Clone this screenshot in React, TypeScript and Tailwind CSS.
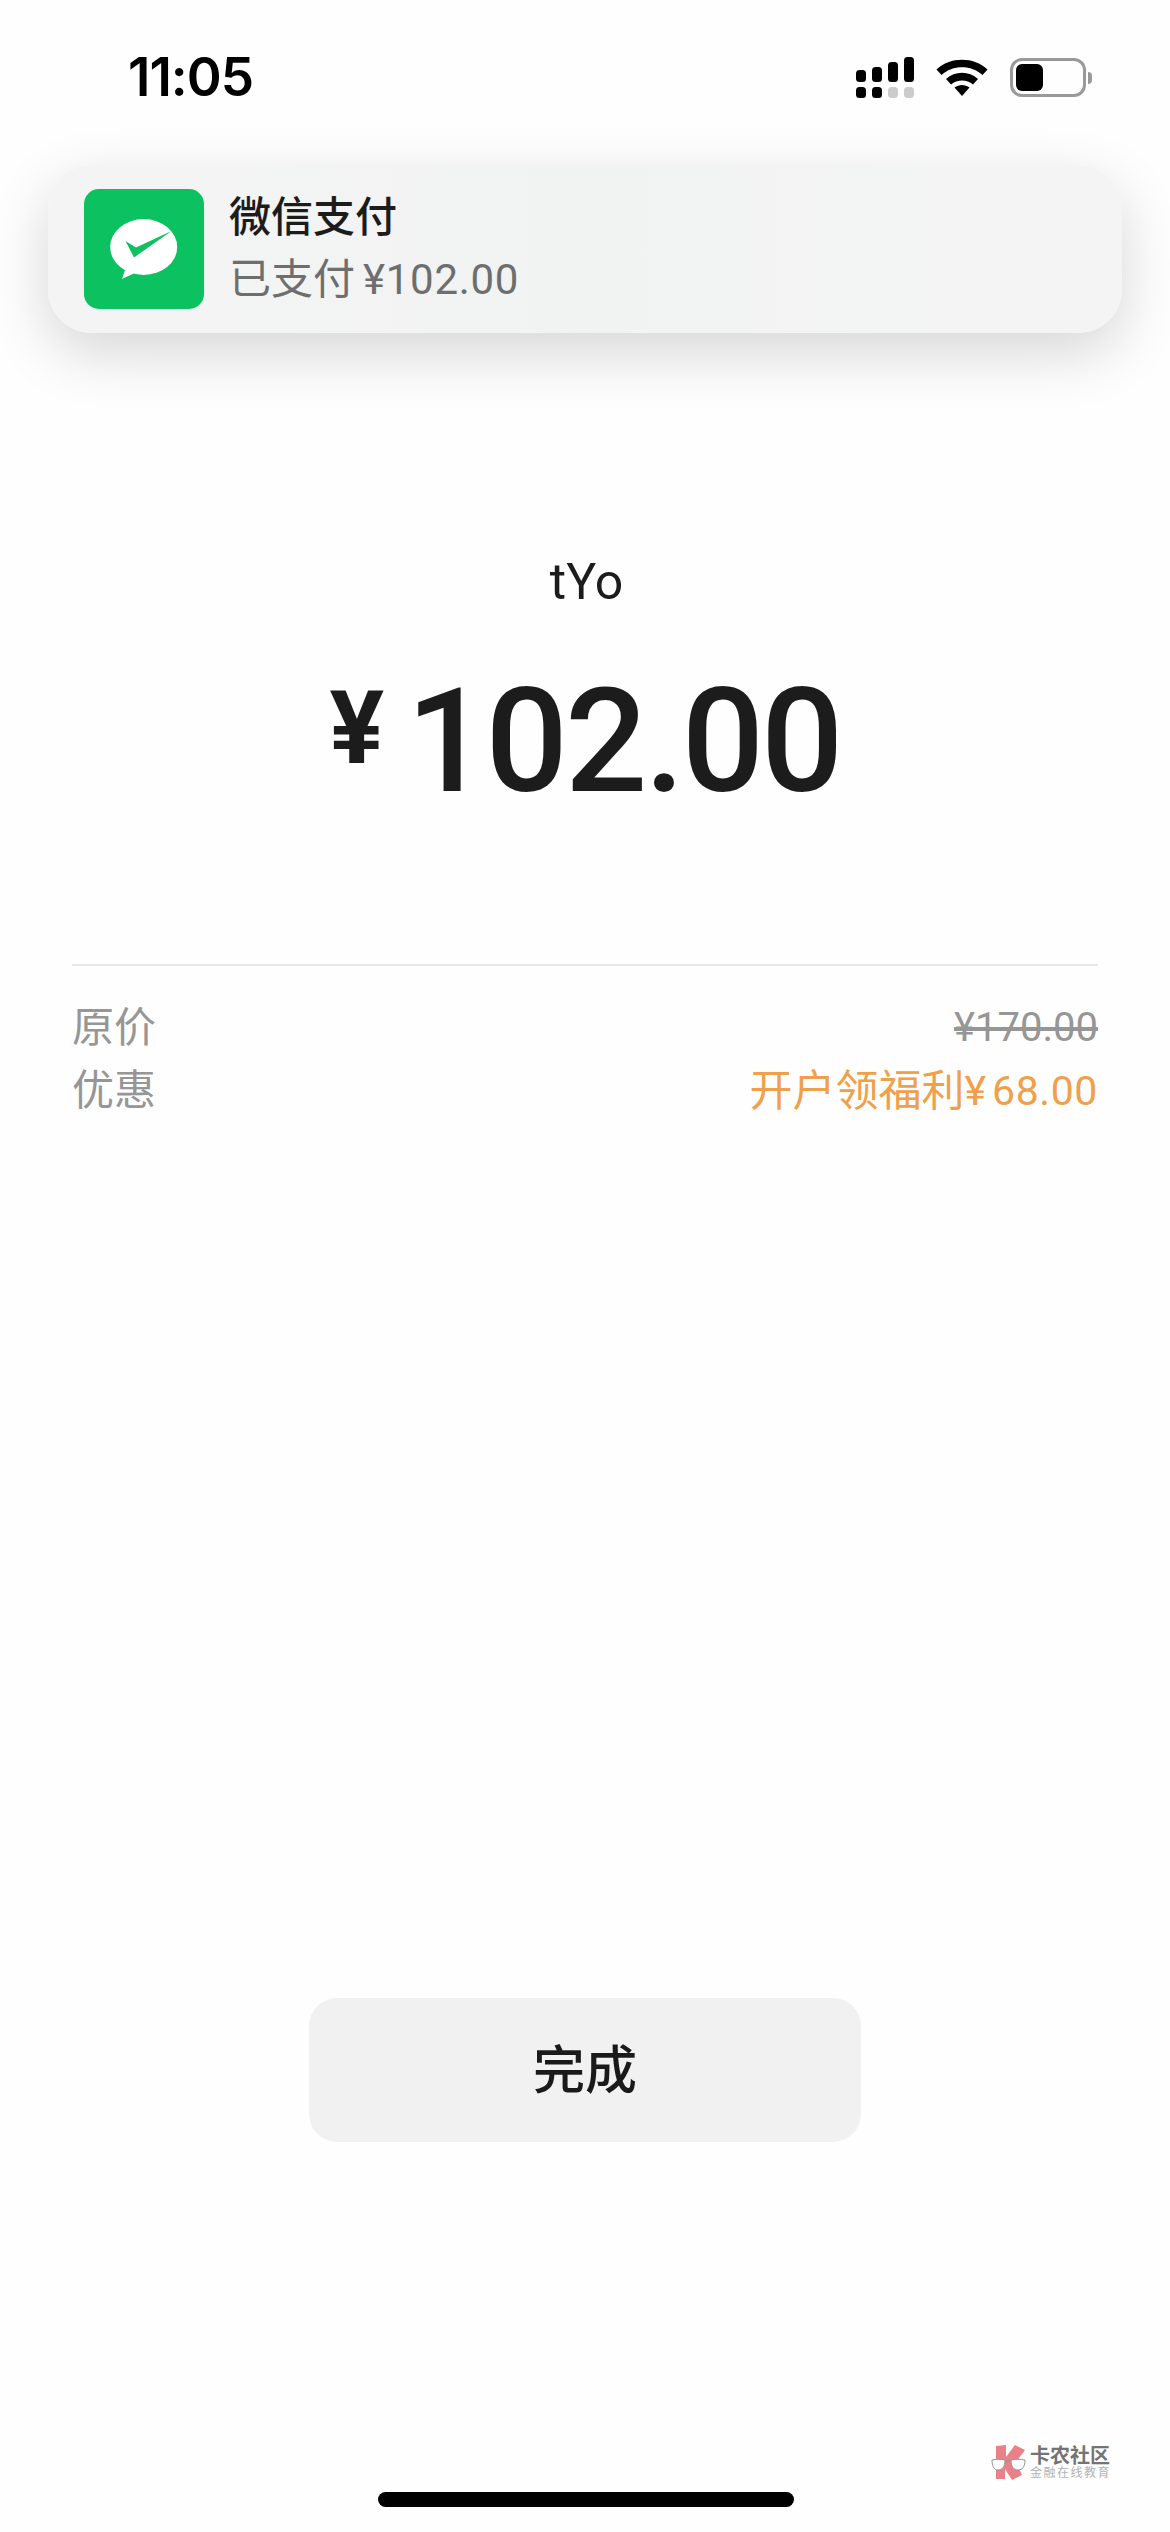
const cjk = "font-['Roboto','Noto_Sans_CJK_SC',sans-serif]";

function SignalIcon() {
  return (
    <svg width="58" height="41" viewBox="0 0 58 41">
      <rect x="0" y="13" width="10" height="12" rx="3.5" fill="#000" />
      <rect x="16" y="10" width="10" height="15" rx="3.5" fill="#000" />
      <rect x="32" y="5" width="10" height="20" rx="3.5" fill="#000" />
      <rect x="48" y="0" width="10" height="25" rx="3.5" fill="#000" />
      <rect x="0" y="30" width="10" height="11" rx="3.5" fill="#000" />
      <rect x="16" y="30" width="10" height="11" rx="3.5" fill="#000" />
      <rect x="32" y="30" width="10" height="11" rx="3.5" fill="#cccccc" />
      <rect x="48" y="30" width="10" height="11" rx="3.5" fill="#cccccc" />
    </svg>
  );
}

function WifiIcon() {
  return (
    <svg width="52" height="37" viewBox="0 0 52 37">
      <path d="M0.5 10.5C14 -2.5 38 -2.5 51.5 10.5L46.5 16C35.5 5.5 16.5 5.5 5.500 16Z" fill="#000" />
      <path d="M10 20C19 11.500 33 11.500 42 20L37 25.500C31 20 21 20 15 25.500Z" fill="#000" />
      <path d="M18.500 28.500C23 25 29 25 33.500 28.500L26 37Z" fill="#000" />
    </svg>
  );
}

function BatteryIcon() {
  return (
    <div className="flex items-center gap-[2px]">
      <div className="w-[76px] h-[39px] rounded-[12px] border-[3px] border-[#999999] p-[3px]">
        <div className="w-[27px] h-full rounded-[6px] bg-black" />
      </div>
      <div className="w-[4px] h-[12px] rounded-r-full bg-[#999999]" />
    </div>
  );
}

function WechatPayIcon() {
  return (
    <svg width="120" height="120" viewBox="0 0 120 120" className="shrink-0">
      <rect width="120" height="120" rx="15" fill="#0bc160" />
      <ellipse cx="59.700" cy="58" rx="33.500" ry="28" fill="#fff" />
      <path d="M42 78L38 90L55 82Z" fill="#fff" />
      <path d="M41.500 52L52 58.500L87.500 42L50 68.500Z" fill="#0bc160" />
    </svg>
  );
}

function Watermark() {
  return (
    <div className="absolute left-[991px] top-[2445px] flex items-center gap-[4px] opacity-90">
      <svg width="35" height="35" viewBox="0 0 35 35">
        <path d="M5 1L15 0V12L24 0L34 5L25 17L31 30L21 35L14 24V34H5Z" fill="#e8737c" />
        <path d="M1 15C5 14 10 14 14 15C14 22 11 25 7 25C3 25 1 21 1 15Z" fill="#fff" stroke="#8a8a8a" strokeWidth="1" />
        <path d="M20 15C24 14 29 14 34 15C34 21 32 25 27 25C23 25 20 22 20 15Z" fill="#fff" stroke="#8a8a8a" strokeWidth="1" />
        <path d="M14 16H20" stroke="#8a8a8a" strokeWidth="1" />
      </svg>
      <div className="flex flex-col">
        <span className={`${cjk} text-[20px] leading-[20px] font-bold text-[#666666] whitespace-nowrap`}>卡农社区</span>
        <span className={`${cjk} text-[12px] leading-[14px] tracking-[1.500px] text-[#aaaaaa] whitespace-nowrap`}>金融在线教育</span>
      </div>
    </div>
  );
}

export default function App() {
  return (
    <div className={`${cjk} relative w-[1170px] h-[2532px] overflow-hidden bg-[#fefefe] flex flex-col`}>
      {/* status bar */}
      <div className="h-[165px] flex justify-between items-start pl-[128px] pr-[78px] pt-[57px]">
        <span className="font-['Inter',sans-serif] text-[53px] leading-[41px] font-semibold text-black tracking-[-1px]">11:05</span>
        <div className="flex items-center gap-[22px]">
          <SignalIcon />
          <WifiIcon />
          <BatteryIcon />
        </div>
      </div>

      {/* notification */}
      <div className="mx-[48px] h-[168px] rounded-[44px] bg-linear-to-r from-[#f4f4f4] via-[#f1f3f2] to-[#f4f4f4] shadow-[0_20px_60px_rgba(0,0,0,0.16)] flex items-center gap-[25px] pl-[36px]">
        <WechatPayIcon />
        <div className="flex flex-col gap-[12px]">
          <span className="text-[42px] leading-[50px] font-medium text-[#1c1c1c]">微信支付</span>
          <div className="flex gap-[8px] text-[42px] leading-[50px] text-[#6e6e6e]">
            <span>已支付</span>
            <span className="tracking-[0.700px]">¥102.00</span>
          </div>
        </div>
      </div>

      {/* amount */}
      <div className="mt-[219px] flex flex-col items-center text-[#1c1c1c]">
        <span className="text-[50px] leading-[60px] pl-[3px]">tYo</span>
        <div className="mt-[42px] flex items-start">
          <span className="text-[102px] leading-[120px] font-bold mt-[14px] mr-[22px]">¥</span>
          <span className="text-[145px] leading-[174px] font-medium tracking-[-3px]">102.00</span>
        </div>
      </div>

      {/* price rows */}
      <div className="mt-[136px] mx-[72px] border-t-2 border-[#e8e8e8] pt-[37px] flex flex-col gap-[13px] leading-[50px]">
        <div className="flex justify-between text-[#969696]">
          <span className="text-[42px]">原价</span>
          <span className="text-[40px] line-through">¥170.00</span>
        </div>
        <div className="flex justify-between">
          <span className="text-[42px] text-[#969696]">优惠</span>
          <div className="flex text-[#f0a04b]">
            <span className="text-[43px]">开户领福利</span>
            <span className="text-[41px] mr-[6px]">¥</span>
            <span className="text-[41px] tracking-[0.600px]">68.00</span>
          </div>
        </div>
      </div>

      {/* done button */}
      <button className="mt-auto mb-[390px] mx-auto pt-[4px] w-[552px] h-[144px] rounded-[28px] bg-[#f1f1f1] text-[52px] font-medium text-[#1a1a1a]">
        完成
      </button>

      <Watermark />
      <div className="absolute left-[378px] top-[2492px] w-[416px] h-[15px] rounded-full bg-black" />
    </div>
  );
}
